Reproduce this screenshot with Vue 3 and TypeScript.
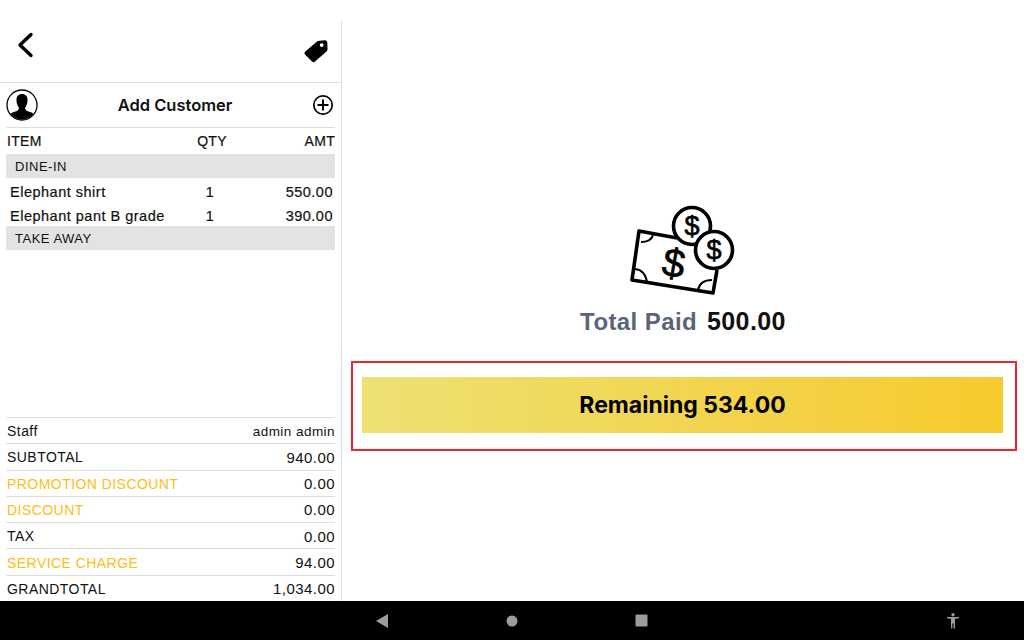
<template>
  <div class="screen">
    <div class="main">
      <aside class="side">
        <div class="top-bar">
          <svg class="back-icon" width="18" height="26" viewBox="0 0 18 26">
            <path d="M15 2.500 L4 13 L15 23.500" fill="none" stroke="#000" stroke-width="3.400" stroke-linecap="round" stroke-linejoin="round" />
          </svg>
          <svg class="tag-icon" width="24" height="23" viewBox="0 0 24 23">
            <path fill-rule="evenodd" d="M0.800 12 L13 1.500 Q14 0.800 15.500 0.800 L21 0.300 Q23 0.300 23.300 2.300 L23.500 9 Q23.500 10.500 22.500 11.500 L11 21.500 Q9.500 22.800 8 21.500 L1 14.500 Q0 13 0.800 12 Z M17.700 3.200 A1.900 1.900 0 1 0 17.701 7 A1.900 1.900 0 1 0 17.700 3.200 Z" fill="#000" />
          </svg>
        </div>
        <div class="customer">
          <svg width="32" height="32" viewBox="0 0 32 32">
            <defs>
              <clipPath id="avatar-clip"><circle cx="16" cy="16" r="14.500" /></clipPath>
            </defs>
            <circle cx="16" cy="16" r="15" fill="#fff" stroke="#000" stroke-width="1.300" />
            <g clip-path="url(#avatar-clip)">
              <path d="M16 5 C20 5 22 8 21.500 12 C21.300 15 20 17.500 19 19 C19 21 21 22 24 23 C27 24 29 25 30 32 L2 32 C3 25 5 24 8 23 C11 22 13 21 13 19 C12 17.500 10.700 15 10.500 12 C10 8 12 5 16 5 Z" fill="#000" />
            </g>
          </svg>
          <span class="customer-name">Add Customer</span>
          <svg class="add-icon" width="22" height="22" viewBox="0 0 22 22">
            <circle cx="11" cy="11" r="9.200" fill="none" stroke="#000" stroke-width="1.700" />
            <path d="M11 5.500 V16.500 M5.500 11 H16.500" stroke="#000" stroke-width="2" />
          </svg>
        </div>
        <div class="table-head">
          <span class="first">ITEM</span>
          <span class="qty">QTY</span>
          <span class="amt">AMT</span>
        </div>
        <template v-for="group in groups" :key="group.name">
          <div class="group">{{ group.name }}</div>
          <div v-for="item in group.items" :key="item.name" class="item">
            <span>{{ item.name }}</span>
            <span class="qty">{{ item.qty }}</span>
            <span class="amt">{{ item.amount }}</span>
          </div>
        </template>
        <div class="summary">
          <div v-for="row in summary" :key="row.label" class="sum-row">
            <span class="sum-label" :class="{ accent: row.accent }">{{ row.label }}</span>
            <span class="sum-value" :class="{ small: row.label === 'Staff' }">{{ row.value }}</span>
          </div>
        </div>
      </aside>
      <section class="content">
        <svg class="money" width="115" height="95" viewBox="0 0 115 95">
          <g fill="none" stroke="#000" stroke-width="3.600">
            <path d="M52 35 L14 28 L7 77 L88 90 L92 67" stroke-linejoin="round" />
            <path d="M16 39 Q26 39 28 32" stroke-width="2" />
            <path d="M10 66 Q20 67 22 79" stroke-width="2" />
            <path d="M73 87 Q75 77 87 77" stroke-width="2" />
            <circle cx="67" cy="23" r="18.500" />
            <circle cx="89" cy="47" r="18.500" fill="#fff" />
          </g>
          <text class="dollar" x="67" y="32" text-anchor="middle" font-size="27">$</text>
          <text class="dollar" x="89" y="56" text-anchor="middle" font-size="27">$</text>
          <text class="dollar" x="49" y="74" text-anchor="middle" font-size="40" transform="rotate(10 49 60)">$</text>
        </svg>
        <div class="paid">
          <span class="paid-label">Total Paid</span>
          <span class="paid-value">500.00</span>
        </div>
        <div class="remaining-box">
          <div class="remaining">Remaining 534.00</div>
        </div>
      </section>
    </div>
    <nav class="nav-bar">
      <svg width="12" height="14" viewBox="0 0 12 14"><path d="M12 0 V14 L0 7 Z" fill="#9c9c9c" /></svg>
      <svg width="12" height="12" viewBox="0 0 12 12"><circle cx="6" cy="6" r="5.500" fill="#9c9c9c" /></svg>
      <svg width="13" height="13" viewBox="0 0 13 13"><rect x="0.500" y="0.500" width="12" height="12" rx="1" fill="#9c9c9c" /></svg>
      <svg width="14" height="16" viewBox="0 0 14 16">
        <circle cx="7" cy="1.800" r="1.700" fill="#9c9c9c" />
        <path d="M1 4 L13 4 L13 5.200 L9 5.800 L9 15.500 L7.600 15.500 L7.600 10.500 L6.400 10.500 L6.400 15.500 L5 15.500 L5 5.800 L1 5.200 Z" fill="#9c9c9c" />
      </svg>
    </nav>
  </div>
</template>

<script setup lang="ts">
interface Item {
  name: string
  qty: number
  amount: string
}

const groups: { name: string; items: Item[] }[] = [
  {
    name: 'DINE-IN',
    items: [
      { name: 'Elephant shirt', qty: 1, amount: '550.00' },
      { name: 'Elephant pant B grade', qty: 1, amount: '390.00' }
    ]
  },
  { name: 'TAKE AWAY', items: [] }
]

const summary = [
  { label: 'Staff', value: 'admin admin', accent: false },
  { label: 'SUBTOTAL', value: '940.00', accent: false },
  { label: 'PROMOTION DISCOUNT', value: '0.00', accent: true },
  { label: 'DISCOUNT', value: '0.00', accent: true },
  { label: 'TAX', value: '0.00', accent: false },
  { label: 'SERVICE CHARGE', value: '94.00', accent: true },
  { label: 'GRANDTOTAL', value: '1,034.00', accent: false }
]
</script>

<style>
html,
body {
  margin: 0;
  background: #fff;
}
</style>

<style scoped>
.screen {
  width: 1024px;
  height: 640px;
  display: flex;
  flex-direction: column;
  overflow: hidden;
  font-family: 'Liberation Sans', Arial, sans-serif;
  color: #111;
  background: #fff;
}

.main {
  flex: 1;
  display: flex;
  min-height: 0;
  padding-top: 20px;
}

.side {
  width: 342px;
  flex: none;
  box-sizing: border-box;
  border-right: 1px solid #e0e0e0;
  display: flex;
  flex-direction: column;
}

.top-bar {
  height: 63px;
  flex: none;
  box-sizing: border-box;
  border-bottom: 1px solid #ddd;
  display: flex;
  justify-content: space-between;
  padding: 12px 13px 0 16px;
}

.tag-icon {
  margin-top: 8px;
}

.customer {
  height: 45px;
  flex: none;
  box-sizing: border-box;
  margin: 0 6px;
  border-bottom: 1px solid #ddd;
  display: flex;
  align-items: center;
  justify-content: space-between;
}

.customer-name {
  font-family: Inter, 'Liberation Sans', sans-serif;
  font-size: 16.500px;
  font-weight: 600;
  color: #111;
}

.add-icon {
  margin-right: 1px;
}

.table-head,
.item {
  display: grid;
  grid-template-columns: 1fr 60px 93px;
  align-items: center;
  margin: 0 6px;
}

.table-head {
  height: 26px;
  font-size: 14px;
  letter-spacing: 0.3px;
  -webkit-text-stroke: 0.2px #111;
}

.first {
  padding-left: 1px;
}

.item {
  height: 24px;
  box-sizing: border-box;
  padding: 3px 2px 0 4px;
  font-size: 14.500px;
  letter-spacing: 0.5px;
  -webkit-text-stroke: 0.2px #111;
}

.qty {
  text-align: center;
}

.amt {
  text-align: right;
}

.group {
  height: 24px;
  margin: 0 6px;
  padding: 0 0 0 9px;
  display: flex;
  align-items: center;
  background: #e3e3e3;
  font-size: 13px;
  letter-spacing: 0.5px;
}

.summary {
  margin: auto 6px 0;
  display: flex;
  flex-direction: column;
}

.sum-row {
  height: 26.300px;
  box-sizing: border-box;
  border-top: 1px solid #ddd;
  padding: 1px 0 0 1px;
  display: flex;
  align-items: center;
  justify-content: space-between;
  font-size: 14px;
  letter-spacing: 0.45px;
}

.sum-value {
  font-size: 15px;
}

.sum-value.small {
  font-size: 13.500px;
}

.accent {
  color: #fdbd14;
}

.content {
  flex: 1;
  display: flex;
  flex-direction: column;
  align-items: center;
  min-width: 0;
  padding: 183px 7px 0 9px;
}

.money {
  flex: none;
  margin-right: 4px;
}

.dollar {
  font-family: 'Liberation Sans', sans-serif;
  fill: #000;
  stroke: #000;
  stroke-width: 0.7px;
}

.paid {
  display: flex;
  align-items: baseline;
  gap: 10px;
  margin-top: 9px;
  margin-right: 2px;
  font-family: 'Liberation Sans', sans-serif;
  font-size: 24px;
  letter-spacing: 0.4px;
}

.paid-label {
  font-weight: 700;
  color: #5b6578;
}

.paid-value {
  font-size: 25px;
  font-weight: 700;
  color: #111;
}

.remaining-box {
  align-self: stretch;
  box-sizing: border-box;
  height: 90px;
  margin-top: 25px;
  padding: 14px 12px 16px 9px;
  border: 2px solid #ee2230;
}

.remaining {
  height: 100%;
  display: flex;
  align-items: center;
  justify-content: center;
  background: linear-gradient(90deg, #ede174, #f7ca2e);
  font-family: Inter, 'Open Sans', sans-serif;
  font-size: 23px;
  font-weight: 700;
  color: #000;
}

.nav-bar {
  height: 39px;
  flex: none;
  background: #000;
  display: flex;
  align-items: center;
}

.nav-bar svg:nth-child(1) {
  margin-left: 376px;
}

.nav-bar svg:nth-child(2) {
  margin-left: 118px;
}

.nav-bar svg:nth-child(3) {
  margin-left: 117px;
}

.nav-bar svg:nth-child(4) {
  margin-left: 298px;
}
</style>
